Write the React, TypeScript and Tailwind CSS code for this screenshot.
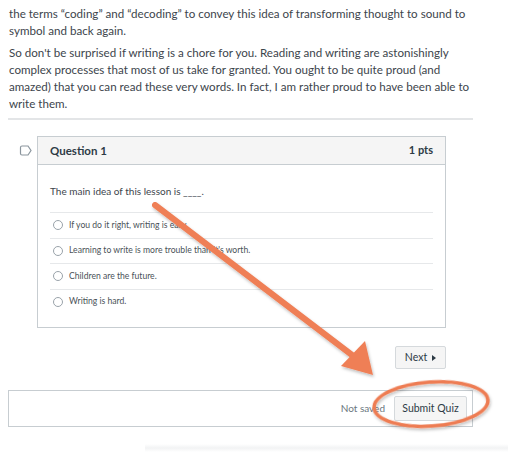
const answers = [
  "If you do it right, writing is easy.",
  "Learning to write is more trouble than it's worth.",
  "Children are the future.",
  "Writing is hard.",
];

export default function App() {
  return (
    <div className="relative w-[508px] h-[463px] overflow-hidden bg-white font-['Lato','Liberation_Sans',sans-serif] text-[#3d454c]">
      <div className="w-[473px] pl-[9px] pt-[5px]">
        <p className="text-[11.6px] leading-[17px]">
          the terms “coding” and “decoding” to convey this idea of transforming thought to sound to symbol and back again.
        </p>
        <p className="mt-[5px] text-[11.6px] leading-[17px]">
          So don't be surprised if writing is a chore for you. Reading and writing are astonishingly complex processes that most of us take for granted. You ought to be quite proud (and amazed) that you can read these very words. In fact, I am rather proud to have been able to write them.
        </p>
      </div>
      <div className="ml-2 mt-[6px] h-[2px] w-[465px] bg-[#e3e5e7]" />

      <div className="mt-[16px] flex">
        <div className="w-[37px] flex justify-end pr-[5px] pt-[9px]">
          <svg width="13" height="11" viewBox="0 0 13 11">
            <path d="M1.5 2.5 Q1.5 1 3 1 H9 L12 5.5 L9 10 H3 Q1.5 10 1.5 8.5 Z" fill="none" stroke="#8b969e" strokeWidth="1.2" />
          </svg>
        </div>
        <div className="w-[409px] border border-[#c7cdd1]">
          <div className="flex h-[28px] items-center justify-between border-b border-[#c7cdd1] bg-[#f5f5f5] px-3">
            <span className="text-[11.5px] font-bold text-[#2d3b45]">Question 1</span>
            <span className="text-[11px] font-bold text-[#2d3b45]">1 pts</span>
          </div>
          <div className="px-3 pb-[13px]">
            <p className="pt-[19px] pb-[13px] text-[10px] text-[#3d454c]">The main idea of this lesson is ____.</p>
            {answers.map((a) => (
              <div key={a} className="flex h-[25.5px] items-center gap-[6px] border-t border-[#e6e8ea] pl-[3px]">
                <span className="h-[10px] w-[10px] rounded-full border border-[#9aa3aa] bg-white" />
                <span className="text-[8.6px] text-[#4a5258]">{a}</span>
              </div>
            ))}
          </div>
        </div>
      </div>

      <div className="mt-[18px] flex w-[446px] justify-end">
        <button className="flex h-[23px] w-[51px] items-center justify-center gap-[5px] rounded-[2px] border border-[#d5d9dc] bg-[#f5f5f5] text-[10.5px] text-[#2d3b45]">
          Next
          <svg width="4" height="6" viewBox="0 0 4 6">
            <path d="M0 0 L4 3 L0 6 Z" fill="#2d3b45" />
          </svg>
        </button>
      </div>

      <div className="ml-2 mt-[21px] flex h-[37px] w-[465px] items-center justify-end gap-[9px] border border-[#c7cdd1] pr-[5px]">
        <span className="text-[10px] text-[#6b7780]">Not saved</span>
        <button className="h-[25px] w-[73px] rounded-[2px] border border-[#d5d9dc] bg-[#f5f5f5] text-[10.5px] text-[#2d3b45]">
          Submit Quiz
        </button>
      </div>

      <div className="absolute left-[145px] top-[444px] h-[8px] w-[363px] bg-gradient-to-b from-white via-[#f2f3f4] to-white" />

      <svg className="pointer-events-none absolute left-0 top-0" width="508" height="463" viewBox="0 0 508 463">
        <defs>
          <filter id="sh" x="-10%" y="-10%" width="120%" height="120%">
            <feDropShadow dx="1" dy="2" stdDeviation="1.5" floodColor="#000" floodOpacity="0.25" />
          </filter>
        </defs>
        <g filter="url(#sh)">
          <line x1="155" y1="205" x2="352" y2="355" stroke="#ef7f56" strokeWidth="6" strokeLinecap="round" />
          <path d="M373 375 L341 366 L365 341 Z" fill="#ef7f56" />
          <ellipse cx="431" cy="404" rx="57" ry="22" fill="none" stroke="#ee7c52" strokeWidth="3.5" transform="rotate(-4 431 404)" />
        </g>
      </svg>
    </div>
  );
}
